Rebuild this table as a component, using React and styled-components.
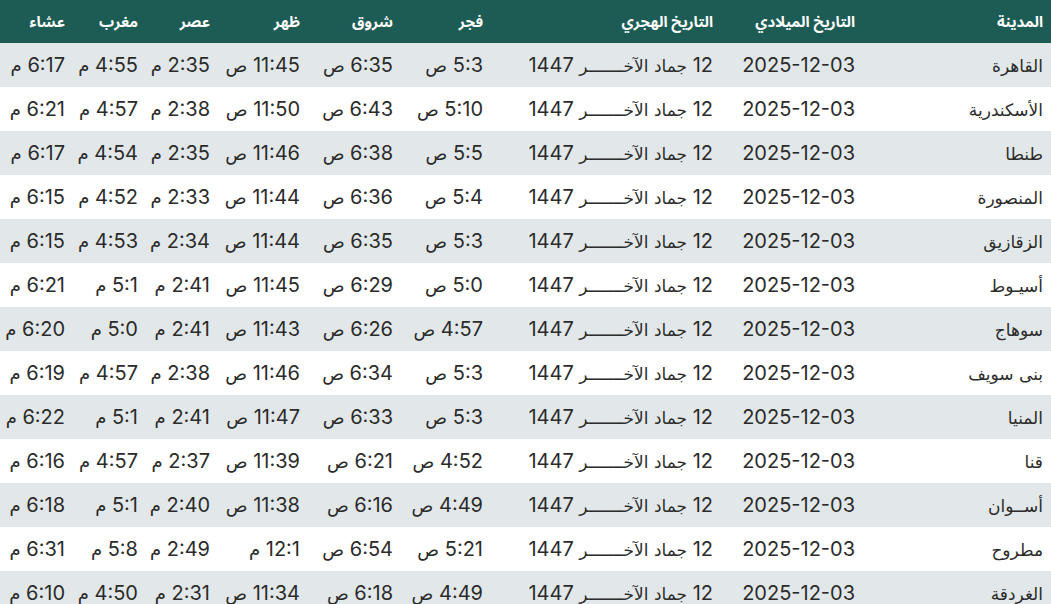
import React from 'react'
import styled, { createGlobalStyle } from 'styled-components'

const GlobalStyles = createGlobalStyle`
  html, body {
    margin: 0;
    padding: 0;
    background: #ffffff;
  }
  *, *::before, *::after {
    box-sizing: border-box;
  }
`

const Table = styled.table`
  width: 100%;
  direction: rtl;
  border-collapse: collapse;
  table-layout: fixed;
  font-family: Inter, "DejaVu Sans", sans-serif;
  color: #2b2b2b;
`

const HeadCell = styled.th`
  width: ${(p) => p.$w}px;
  height: 43px;
  padding: 0 ${(p) => (p.$first ? 8 : 16)}px 0 0;
  background: #1d5c55;
  color: #ffffff;
  font-family: "Noto Sans Arabic", "DejaVu Sans", sans-serif;
  font-size: 15px;
  font-weight: 700;
  text-align: right;
  white-space: nowrap;
`

const Row = styled.tr`
  background: ${(p) => (p.$striped ? '#e2e8e9' : '#ffffff')};
`

const Cell = styled.td`
  height: 44px;
  padding: 0 ${(p) => (p.$first ? 8 : 16)}px 0 0;
  font-size: 20px;
  text-align: right;
  white-space: nowrap;
`

const Arabic = styled.span`
  font-family: "DejaVu Sans", sans-serif;
  font-size: ${(p) => p.$size || 18}px;
`

const columns = [
  { label: 'المدينة', w: 180 },
  { label: 'التاريخ الميلادي', w: 142 },
  { label: 'التاريخ الهجري', w: 230 },
  { label: 'فجر', w: 90 },
  { label: 'شروق', w: 93 },
  { label: 'ظهر', w: 90 },
  { label: 'عصر', w: 72 },
  { label: 'مغرب', w: 73 },
  { label: 'عشاء', w: 81 },
]

const rows = [
  ['القاهرة', '5:3 ص', '6:35 ص', '11:45 ص', '2:35 م', '4:55 م', '6:17 م'],
  ['الأسكندرية', '5:10 ص', '6:43 ص', '11:50 ص', '2:38 م', '4:57 م', '6:21 م'],
  ['طنطا', '5:5 ص', '6:38 ص', '11:46 ص', '2:35 م', '4:54 م', '6:17 م'],
  ['المنصورة', '5:4 ص', '6:36 ص', '11:44 ص', '2:33 م', '4:52 م', '6:15 م'],
  ['الزقازيق', '5:3 ص', '6:35 ص', '11:44 ص', '2:34 م', '4:53 م', '6:15 م'],
  ['أسيـوط', '5:0 ص', '6:29 ص', '11:45 ص', '2:41 م', '5:1 م', '6:21 م'],
  ['سوهاج', '4:57 ص', '6:26 ص', '11:43 ص', '2:41 م', '5:0 م', '6:20 م'],
  ['بنى سويف', '5:3 ص', '6:34 ص', '11:46 ص', '2:38 م', '4:57 م', '6:19 م'],
  ['المنيا', '5:3 ص', '6:33 ص', '11:47 ص', '2:41 م', '5:1 م', '6:22 م'],
  ['قنا', '4:52 ص', '6:21 ص', '11:39 ص', '2:37 م', '4:57 م', '6:16 م'],
  ['أســوان', '4:49 ص', '6:16 ص', '11:38 ص', '2:40 م', '5:1 م', '6:18 م'],
  ['مطروح', '5:21 ص', '6:54 ص', '12:1 م', '2:49 م', '5:8 م', '6:31 م'],
  ['الغردقة', '4:49 ص', '6:18 ص', '11:34 ص', '2:31 م', '4:50 م', '6:10 م'],
]

function Time({ value }) {
  const [num, suffix] = value.split(' ')
  return (
    <>
      {num} <Arabic>{suffix}</Arabic>
    </>
  )
}

function App() {
  return (
    <>
      <GlobalStyles />
      <Table>
        <thead>
          <tr>
            {columns.map((c, i) => (
              <HeadCell key={c.label} $w={c.w} $first={i === 0}>
                {c.label}
              </HeadCell>
            ))}
          </tr>
        </thead>
        <tbody>
          {rows.map(([city, ...times], i) => (
            <Row key={city} $striped={i % 2 === 0}>
              <Cell $first>
                <Arabic $size={17}>{city}</Arabic>
              </Cell>
              <Cell>2025-12-03</Cell>
              <Cell>
                12 <Arabic $size={17}>جماد الآخـــــــر</Arabic> 1447
              </Cell>
              {times.map((t, j) => (
                <Cell key={j}>
                  <Time value={t} />
                </Cell>
              ))}
            </Row>
          ))}
        </tbody>
      </Table>
    </>
  )
}

export default App
